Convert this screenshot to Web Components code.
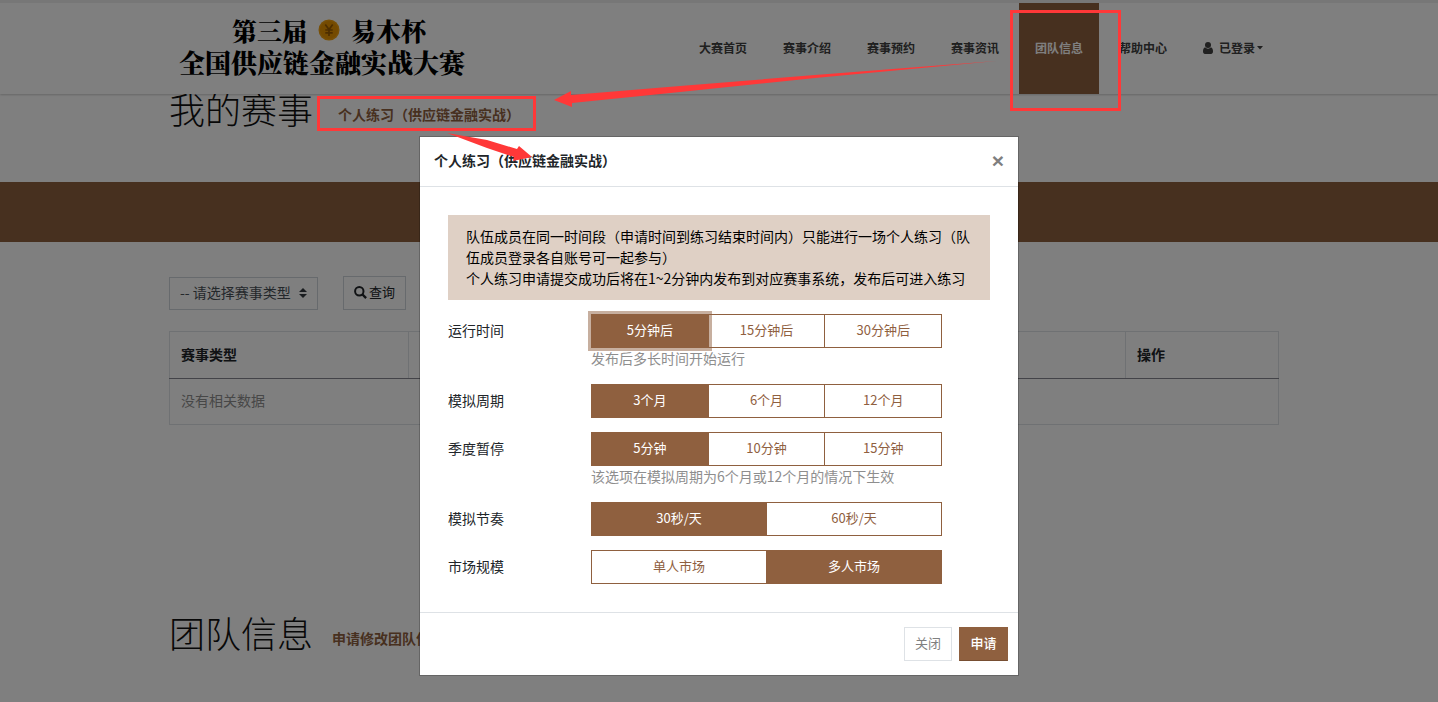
<!DOCTYPE html>
<html lang="zh-CN">
<head>
<meta charset="utf-8">
<meta name="viewport" content="width=device-width, initial-scale=1">
<title>全国供应链金融实战大赛</title>
<style>
html { --brand: #8f603f; --line: #dee2e6; }
body { margin: 0; background: #fff; color: #212529; font: 14px/21px "Noto Sans CJK SC", sans-serif; }
</style>
</head>
<body>
<contest-page></contest-page>
<script>
const define = (name, html, setup) => {
  const template = document.createElement('template');
  template.innerHTML = html;
  customElements.define(name, class extends HTMLElement {
    constructor() {
      super();
      this.attachShadow({ mode: 'open' }).append(template.content.cloneNode(true));
    }
    connectedCallback() { if (setup) setup(this, this.shadowRoot); }
  });
};

define('contest-logo', `
<style>
:host { display: block; }
a { display: grid; justify-items: center; color: #000; text-decoration: none; font: 900 26px/32px "Noto Serif CJK SC", "Noto Sans CJK SC", serif; }
.top { display: flex; align-items: center; gap: 11px; padding-left: 14px; font-size: 25px; }
svg { display: block; }
</style>
<a href="#home"><span class="top"><span>第三届</span>
<svg width="22" height="22" viewBox="0 0 22 22" aria-hidden="true"><circle cx="11" cy="11" r="10.5" fill="#f0a010"/><circle cx="11" cy="11" r="9" fill="#e89400"/><path d="M7.300 5.500L11 10.500l3.700-5M11 10.500V17M7.300 11h7.400M7.300 13.800h7.400" fill="none" stroke="#9a5c00" stroke-width="1.700"/></svg>
<span>易木杯</span></span><span>全国供应链金融实战大赛</span></a>`);

define('nav-item', `
<style>
:host { display: block; }
a { display: flex; align-items: center; box-sizing: border-box; height: 91px; padding: 0 16px 2px; color: #404040; text-decoration: none; font: 700 12px/20px "Noto Sans CJK SC", sans-serif; white-space: nowrap; }
:host([active]) a { background: var(--brand); color: #fff; }
</style>
<a href="#"><slot></slot></a>`);

define('site-header', `
<style>
:host { display: block; position: relative; z-index: 1; background: #fff; border-top: 3px solid #eee; box-shadow: 0 1px 2px rgba(0,0,0,.2); }
.bar { display: flex; justify-content: space-between; max-width: 1110px; margin: 0 auto; padding-left: 10px; height: 91px; }
contest-logo { margin: 11px 0 0 10px; }
nav { display: flex; gap: 4px; }
.user { margin-right: 6px; }
.caret { margin-left: 2px; }
</style>
<div class="bar"><contest-logo></contest-logo>
<nav aria-label="主导航">
<nav-item>大赛首页</nav-item><nav-item>赛事介绍</nav-item><nav-item>赛事预约</nav-item><nav-item>赛事资讯</nav-item><nav-item active>团队信息</nav-item><nav-item>帮助中心</nav-item>
<nav-item><svg class="user" width="10" height="12" viewBox="0 0 10 12" fill="currentColor" aria-hidden="true"><circle cx="5" cy="3" r="3"/><path d="M2 5.300C.6 6 0 7.500 0 9.300 0 11 .8 12 2 12h6c1.200 0 2-1 2-2.700 0-1.800-.6-3.300-2-4a4 4 0 0 1-6 0z"/></svg>已登录<svg class="caret" width="6" height="4" viewBox="0 0 6 4" fill="currentColor" aria-hidden="true"><path d="M0 0h6L3 3.500z"/></svg></nav-item>
</nav></div>`);

define('section-title', `
<style>
:host { display: flex; align-items: center; }
h2 { margin: 0; font-size: 36px; line-height: 43px; font-weight: 300; color: #111; }
</style>
<h2><slot></slot></h2><slot name="action"></slot>`);

define('type-filter', `
<style>
:host { display: flex; align-items: center; gap: 25px; }
.pick { display: flex; align-items: center; position: relative; }
select { appearance: none; box-sizing: border-box; width: 149px; height: 33px; margin: 0; padding: 0 10px 2px; border: 1px solid #ced4da; border-radius: 0; background: #fff; color: #495057; font: 14px/21px "Noto Sans CJK SC", sans-serif; }
.pick svg { position: absolute; right: 11px; pointer-events: none; }
button { display: flex; align-items: center; justify-content: center; gap: 2px; box-sizing: border-box; width: 63px; height: 34px; padding: 0 0 2px; border: 1px solid #ced4da; background: #fff; color: #212529; font: 13px/20px "Noto Sans CJK SC", sans-serif; }
</style>
<label class="pick"><select aria-label="赛事类型"><option>-- 请选择赛事类型</option></select>
<svg width="8" height="10" viewBox="0 0 8 10" fill="#343a40" aria-hidden="true"><path d="M0 4l4-4 4 4zM0 6h8l-4 4z"/></svg></label>
<button type="button"><svg width="13" height="13" viewBox="0 0 13 13" fill="none" stroke="currentColor" aria-hidden="true"><circle cx="5.300" cy="5.300" r="4.200" stroke-width="2"/><path d="M8.500 8.500l3.600 3.600" stroke-width="2.400"/></svg>查询</button>`);

define('contest-table', `
<style>
:host { display: block; }
table { width: 100%; border-collapse: collapse; table-layout: fixed; border: 1px solid var(--line); }
th, td { box-sizing: border-box; height: 47px; padding: 0 11px 2px; text-align: left; }
th { border: 1px solid var(--line); border-bottom: 1px solid #868691; font-weight: 700; }
td { height: 46px; color: #8e8e8e; }
.type { width: 239px; } .act { width: 153px; }
</style>
<table><thead><tr><th class="type" scope="col">赛事类型</th><th></th><th class="act" scope="col">操作</th></tr></thead>
<tbody><tr><td colspan="3">没有相关数据</td></tr></tbody></table>`);

define('choice-group', `
<style>
:host { display: grid; grid-template-columns: 128px minmax(0, 351px); column-gap: 15px; line-height: 32px; }
.set { display: flex; }
label { position: relative; flex: 1 1 0; box-sizing: border-box; height: 34px; border: 1px solid var(--brand); color: var(--brand); font-size: 13px; line-height: 29px; text-align: center; }
label + label { margin-left: -1px; }
input { position: absolute; inset: 0; margin: 0; opacity: 0; }
label:has(input:checked) { background: var(--brand); color: #fff; }
:host([focused]) label:has(input:checked) { z-index: 1; box-shadow: 0 0 0 3px rgba(143,96,63,.5); }
small { grid-column: 2; height: 22px; color: #8e8e8e; font-size: 14px; line-height: 20px; }
</style>
<span id="name"></span><div class="set" role="radiogroup" aria-labelledby="name"></div>`, (host, root) => {
  const name = host.getAttribute('name');
  root.querySelector('#name').textContent = name;
  const chosen = Number(host.getAttribute('chosen') || 0);
  const set = root.querySelector('.set');
  host.getAttribute('options').split('|').forEach((text, i) => {
    const label = document.createElement('label');
    const input = document.createElement('input');
    input.type = 'radio';
    input.name = name;
    input.checked = i === chosen;
    label.append(input, text);
    set.append(label);
  });
  if (host.hasAttribute('hint')) {
    const hint = document.createElement('small');
    hint.textContent = host.getAttribute('hint');
    root.append(hint);
  }
});

define('modal-dialog', `
<style>
:host { display: flex; position: absolute; inset: 0; z-index: 2; justify-content: center; align-items: flex-start; padding: 136px 20px 0; background: rgba(0,0,0,.5); }
.panel { width: 598px; border: 1px solid rgba(0,0,0,.2); background: #fff; background-clip: padding-box; color: #212529; }
header { display: flex; align-items: center; justify-content: space-between; box-sizing: border-box; height: 50px; padding: 0 14px 2px; border-bottom: 1px solid var(--line); }
h5 { margin: 0; font-size: 14px; line-height: 21px; font-weight: 700; }
header button { padding: 0; border: 0; background: none; color: #7f7f7f; font: 700 21px/21px "Liberation Sans", sans-serif; }
.body { padding: 28px; }
footer { display: flex; justify-content: flex-end; gap: 7px; padding: 14px 10px; border-top: 1px solid var(--line); }
</style>
<section class="panel" role="dialog" aria-labelledby="title">
<header><h5 id="title"><slot name="title"></slot></h5><button type="button" aria-label="关闭">×</button></header>
<div class="body"><slot></slot></div>
<footer><slot name="footer"></slot></footer></section>`);

define('push-button', `
<style>
:host { display: block; }
button { display: block; box-sizing: border-box; height: 34px; margin: 0; padding: 0 10px 3px; border: 1px solid var(--line); background: #fff; color: #808080; font: 13px/20px "Noto Sans CJK SC", sans-serif; }
:host([primary]) button { min-width: 49px; border-color: var(--brand); border-bottom-color: #774e32; background: var(--brand); color: #fff; font-weight: 500; }
</style>
<button type="button"><slot></slot></button>`);

define('guide-marks', `
<style>
:host { display: flex; position: absolute; inset: 0; z-index: 3; justify-content: center; overflow: hidden; pointer-events: none; }
svg { display: block; flex: none; }
</style>
<svg width="1438" height="702" viewBox="0 0 1438 702" fill="none" aria-hidden="true">
<rect x="1011.500" y="11.500" width="108" height="98" stroke="#ff3838" stroke-width="3"/>
<rect x="318.500" y="97.500" width="216" height="32" stroke="#ff3838" stroke-width="3"/>
<path fill="#ff3838" d="M996 61L815 75 680 86 571 95V91L554 100l18 7v-4l108-11 135-14z"/>
<path fill="#ff3838" d="M447 133l40 7 30 9 2-3 13 11-19 4 1-4-27-9z"/>
</svg>`);

define('contest-page', `
<style>
:host { display: block; position: relative; min-height: 100vh; overflow: hidden; }
.wrap { max-width: 1110px; margin: 0 auto; padding-left: 10px; }
.mine { margin-top: -7px; }
.band { height: 60px; margin-top: 52px; background: var(--brand); }
type-filter { margin-top: 34px; }
contest-table { margin-top: 21px; }
.team { margin-top: 186px; }
a { color: var(--brand); font-weight: 700; text-decoration: none; margin: 12px 0 0 19px; }
.mine a { margin-left: 25px; }
.notice { margin: 0 0 14px; padding: 11px 18px; background: #dfd0c5; color: #000; }
form { display: grid; gap: 14px; }
</style>
<site-header></site-header>
<main>
<section-title class="wrap mine">我的赛事<a slot="action" href="#practice">个人练习（供应链金融实战）</a></section-title>
<div class="band"></div>
<div class="wrap"><type-filter></type-filter><contest-table></contest-table></div>
<section-title class="wrap team">团队信息<a slot="action" href="#team">申请修改团队信息</a></section-title>
</main>
<modal-dialog><span slot="title">个人练习（供应链金融实战）</span>
<p class="notice">队伍成员在同一时间段（申请时间到练习结束时间内）只能进行一场个人练习（队伍成员登录各自账号可一起参与）<br>个人练习申请提交成功后将在1~2分钟内发布到对应赛事系统，发布后可进入练习</p>
<form>
<choice-group focused name="运行时间" options="5分钟后|15分钟后|30分钟后" hint="发布后多长时间开始运行"></choice-group>
<choice-group name="模拟周期" options="3个月|6个月|12个月"></choice-group>
<choice-group name="季度暂停" options="5分钟|10分钟|15分钟" hint="该选项在模拟周期为6个月或12个月的情况下生效"></choice-group>
<choice-group name="模拟节奏" options="30秒/天|60秒/天"></choice-group>
<choice-group name="市场规模" options="单人市场|多人市场" chosen="1"></choice-group>
</form>
<push-button slot="footer">关闭</push-button><push-button slot="footer" primary>申请</push-button>
</modal-dialog>
<guide-marks></guide-marks>`);
</script>
</body>
</html>
